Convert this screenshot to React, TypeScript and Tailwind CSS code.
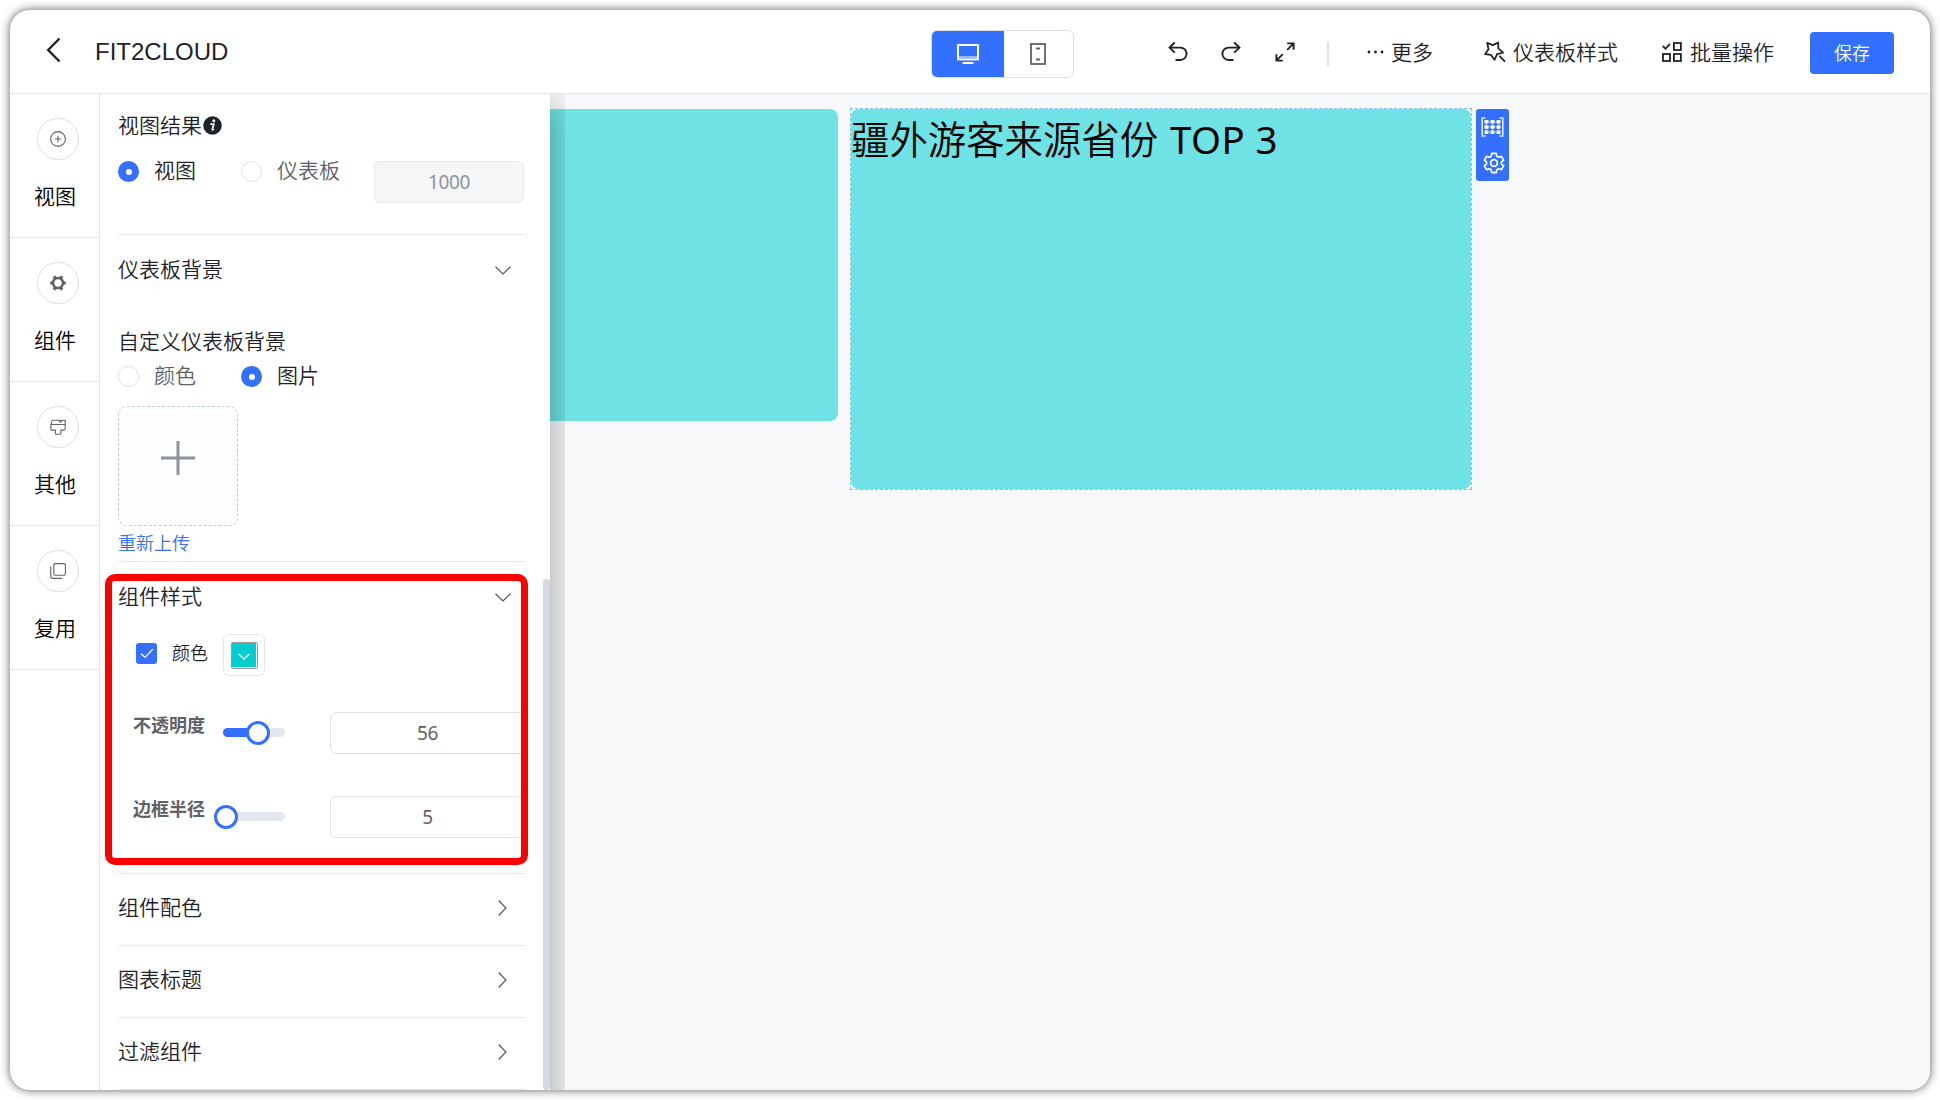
import React from "react";

type IconProps = { className?: string };

const ChevronDown = ({ className = "text-[#55585e]" }: IconProps) => (
  <svg width="16" height="9" viewBox="0 0 16 9" fill="none" stroke="currentColor" strokeWidth="1.2" className={className}>
    <path d="M0.5 0.7 8 7.9 15.5 0.7" />
  </svg>
);

const ChevronRight = () => (
  <svg width="9" height="16" viewBox="0 0 9 16" fill="none" stroke="#55585e" strokeWidth="1.2">
    <path d="M0.7 0.5 7.9 8 0.7 15.5" />
  </svg>
);

const CirclePlus = () => (
  <svg width="16" height="16" viewBox="0 0 16 16" fill="none" stroke="#606266" strokeWidth="1.1">
    <circle cx="8" cy="8" r="7.4" />
    <path d="M8 4.8v6.4M4.8 8h6.4" />
  </svg>
);

const SolidGear = () => (
  <svg width="16" height="16" viewBox="0 0 16 16" fill="none" stroke="#606266">
    <circle cx="8" cy="8" r="5" strokeWidth="2.6" />
    <path
      d="M.2 8h2.6M13.200 8h2.600M4.100 1.200l1.300 2.300M10.600 12.500l1.300 2.300M11.900 1.200l-1.300 2.300M5.400 12.500l-1.300 2.300"
      strokeWidth="3.2"
    />
  </svg>
);

const Brush = () => (
  <svg width="16" height="16" viewBox="0 0 16 16" fill="none" stroke="#606266" strokeWidth="1.1" strokeLinejoin="round">
    <path d="M1.300 5.500C1.300 3 1.600 1.200 3 1.200h7.600L9.600 3.200l3.200-2h2.400v4.300" />
    <path d="M.8 5.500h14.400v4.200q0 1.400-1.400 1.400h-2.900v3.300q0 .8-.8.800H6.200q-.8 0-.8-.8v-3.300H2.200q-1.400 0-1.400-1.400Z" />
  </svg>
);

const CopyDoc = () => (
  <svg width="16" height="16" viewBox="0 0 16 16" fill="none" stroke="#606266" strokeWidth="1.1">
    <rect x="3.800" y=".6" width="11.600" height="11.600" rx="1.400" />
    <path d="M.7 3.400V13q0 2.400 2 2.400h9.600" />
  </svg>
);

const InfoIcon = () => (
  <svg width="19" height="19" viewBox="0 0 19 19" className="ml-px">
    <circle cx="9.500" cy="9.500" r="9.300" fill="#1f2329" />
    <circle cx="10.800" cy="4.800" r="1.500" fill="#fff" />
    <path d="M7.400 8h3.400L9.300 13.400q-.2.9 1.600-.2M7.400 8.100h2" stroke="#fff" strokeWidth="1.700" fill="none" />
  </svg>
);

const Monitor = () => (
  <svg width="22" height="20" viewBox="0 0 22 20" fill="none" stroke="#fff">
    <rect x="1" y="1" width="20" height="14.400" strokeWidth="2" />
    <path d="M1 13h20" strokeWidth="1" />
    <path d="M5.500 19h11" strokeWidth="2" />
  </svg>
);

const Tablet = () => (
  <svg width="16" height="22" viewBox="0 0 16 22" fill="none" stroke="#606266">
    <rect x="1" y="1" width="14" height="20" strokeWidth="1.800" />
    <path d="M6 5.400h4M6 16.600h4" strokeWidth="2" />
  </svg>
);

const Undo = ({ className = "" }: IconProps) => (
  <svg width="20" height="20" viewBox="0 0 20 20" fill="none" stroke="#1f2329" strokeWidth="1.900" strokeLinecap="round" className={className}>
    <path d="M6.200 1 1.600 5.600l4.600 4.600" />
    <path d="M1.800 5.600h10.600a6.100 6.100 0 0 1 0 12.400H8.200" />
  </svg>
);

const Expand = () => (
  <svg width="20" height="20" viewBox="0 0 20 20" fill="none" stroke="#1f2329" strokeWidth="1.900">
    <path d="M12.200 1.400h6.400v6.400M18.400 1.600l-6.200 6.200M1.400 12.200v6.400h6.400M1.600 18.400l6.200-6.200" />
  </svg>
);

const MagicStar = () => (
  <svg width="22" height="22" viewBox="0 0 22 22" fill="none" stroke="#1f2329" strokeWidth="1.800" strokeLinejoin="round">
    <path d="m3.200 1.900 5.700 2.200 5.300-2.600.1 5.800 4.800 4.300-6 1.600-2.600 5.600-3.600-5-5.900-.6 3.500-5Z" />
    <path d="m15.400 14.800 5.600 5.800" />
  </svg>
);

const BatchIcon = () => (
  <svg width="20" height="20" viewBox="0 0 20 20" fill="none" stroke="#1f2329" strokeWidth="1.800">
    <path d="m.8 4 2.800 2.800L8 1.800" />
    <rect x="11.900" y="1" width="7" height="7" />
    <rect x="1" y="12" width="7" height="7" />
    <rect x="11.900" y="12" width="7" height="7" />
  </svg>
);

const MatrixIcon = () => (
  <svg width="23" height="20" viewBox="0 0 23 20" fill="none" stroke="#fff">
    <path d="M4.500 1H1.200v18h3.300M18.500 1h3.300v18h-3.300" strokeWidth="1.600" opacity=".85" />
    <path d="M5.500 3v14M11.500 3v14M17.500 3v14M3 5h17M3 10h17M3 15h17" strokeWidth="1" opacity=".55" />
    <path d="M5.500 3v14M11.500 3v14M17.500 3v14" strokeWidth="3.800" strokeDasharray="3.600 1.600" />
  </svg>
);

const OutlineGear = () => (
  <svg width="22" height="22" viewBox="0 0 24 24" fill="none" stroke="#fff" strokeWidth="1.900" strokeLinejoin="round">
    <path d="M9.600 1.500h4.800l.7 3.100 1.900 1.100 3.100-1 2.400 4.200-2.400 2.100v2l2.400 2.100-2.400 4.200-3.100-1-1.900 1.100-.7 3.100H9.600l-.7-3.100L7 18.300l-3.100 1-2.400-4.200L3.900 13v-2L1.500 8.900l2.400-4.200 3.100 1 1.900-1.100Z" />
    <circle cx="12" cy="12" r="3.700" />
  </svg>
);

function Radio({ on, label, className = "" }: { on?: boolean; label: string; className?: string }) {
  return (
    <div className={`flex h-[21px] items-center ${className}`}>
      {on ? (
        <span className="flex size-[21px] items-center justify-center rounded-full bg-[#3370ff]">
          <span className="size-[6px] rounded-full bg-white" />
        </span>
      ) : (
        <span className="size-[21px] rounded-full border border-[#dcdfe6] bg-white" />
      )}
      <span className={on ? "mb-[3px] ml-[15px] text-[#1f2329]" : "mb-[3px] ml-[15px] text-[#606266]"}>{label}</span>
    </div>
  );
}

function NavItem({ icon, label }: { icon: React.ReactNode; label: string }) {
  return (
    <div className="flex h-36 flex-col border-b border-[#e4e5e7] pt-6">
      <div className="ml-[27px] flex size-[42px] items-center justify-center rounded-full border border-[#dcdfe6]">{icon}</div>
      <div className="ml-6 mt-5 text-[21px] leading-[32px] text-black">{label}</div>
    </div>
  );
}

function SliderRow({ label, value, percent }: { label: string; value: string; percent: number }) {
  return (
    <div className="flex h-[42px]">
      <div className="w-[90px] shrink-0 pl-[15px] text-[18px] font-bold leading-[26px] text-[#606266]">{label}</div>
      <div className="ml-[15px] mt-4 h-[9px] w-[62px] shrink-0 rounded-full bg-[#e4e7ed]">
        <div className="relative h-full rounded-full bg-[#3370ff]" style={{ width: `${percent}%` }}>
          <span className="absolute -right-3 -top-[7px] size-6 rounded-full border-[3px] border-[#3370ff] bg-white" />
        </div>
      </div>
      <div className="ml-[45px] flex h-[42px] w-[195px] shrink-0 items-center justify-center rounded-md border border-[#dcdfe6] text-[19px] font-normal tracking-[-0.4px] text-[#606266]">
        {value}
      </div>
    </div>
  );
}

function CollapsedRow({ label }: { label: string }) {
  return (
    <div className="flex h-[72px] items-center justify-between border-b border-[#e6e8f0] pb-[3px] pr-[18px] text-[#1f2329]">
      <span className="mb-[2px]">{label}</span>
      <ChevronRight />
    </div>
  );
}

export default function App() {
  return (
    <div className="h-[1100px] w-[1940px] overflow-hidden bg-white p-[10px] font-['Noto_Sans','Noto_Sans_CJK_SC',sans-serif] text-[21px] font-[350] leading-[32px]">
      <div className="flex h-[1080px] w-[1920px] flex-col overflow-hidden rounded-[20px] bg-white shadow-[0_0_10px_rgba(0,0,0,0.65)]">
        <header className="flex h-[84px] shrink-0 items-center border-b border-[#e4e5e7] text-[#1f2329]">
          <svg width="15" height="26" viewBox="0 0 15 26" fill="none" stroke="#1f2329" strokeWidth="2.400" className="mb-1 ml-9">
            <path d="M13.500 1.500 2.200 13l11.300 11.500" />
          </svg>
          <div className="ml-[34px] w-[801px] font-['Liberation_Sans',sans-serif] text-[24px] font-normal">FIT2CLOUD</div>
          <div className="ml-[35px] mt-[5px] flex h-12 w-[143px] overflow-hidden rounded-md border border-[#dcdfe6]">
            <div className="-m-px flex w-[73px] items-center justify-center bg-[#3370ff]">
              <Monitor />
            </div>
            <div className="flex flex-1 items-center justify-center">
              <Tablet />
            </div>
          </div>
          <div className="ml-[93.500px] flex items-center">
            <Undo />
            <Undo className="ml-[33.500px] -scale-x-100" />
            <span className="ml-[34px]"><Expand /></span>
          </div>
          <span className="ml-8 mt-1 h-6 w-[2px] bg-[#dcdfe6]" />
          <svg width="17" height="4" viewBox="0 0 17 4" fill="#1f2329" className="ml-[38px]">
            <circle cx="2" cy="2" r="1.400" />
            <circle cx="8.500" cy="2" r="1.400" />
            <circle cx="15" cy="2" r="1.400" />
          </svg>
          <span className="ml-[7px]">更多</span>
          <span className="ml-[51px]"><MagicStar /></span>
          <span className="ml-[7px]">仪表板样式</span>
          <span className="ml-11"><BatchIcon /></span>
          <span className="ml-2">批量操作</span>
          <button className="ml-9 mt-[2px] h-[42px] w-[84px] rounded bg-[#3370ff] text-[18px] text-white">保存</button>
        </header>

        <div className="flex min-h-0 flex-1">
          <nav className="w-[90px] shrink-0 border-r border-[#e4e5e7]">
            <NavItem icon={<CirclePlus />} label="视图" />
            <NavItem icon={<SolidGear />} label="组件" />
            <NavItem icon={<Brush />} label="其他" />
            <NavItem icon={<CopyDoc />} label="复用" />
          </nav>

          <aside className="flex w-[450px] shrink-0 bg-white">
            <div className="ml-[18px] w-[407px] shrink-0">
              <section className="h-[141px] border-b border-[#e6e8f0] pt-[15px] text-[#1f2329]">
                <div className="flex items-center">
                  视图结果
                  <InfoIcon />
                </div>
                <div className="mt-5 flex">
                  <Radio on label="视图" className="w-[123px]" />
                  <Radio label="仪表板" className="w-[133px]" />
                  <div className="flex h-[42px] w-[150px] items-center justify-center rounded-md border border-[#e4e7ed] bg-[#f5f6f7] text-[19px] font-normal tracking-[-0.4px] text-[#8f959e]">
                    1000
                  </div>
                </div>
              </section>

              <section className="h-[327px] border-b border-[#e6e8f0] text-[#1f2329]">
                <div className="flex h-[70px] items-center justify-between pr-[14px]">
                  <span className="mb-[2px]">仪表板背景</span>
                  <ChevronDown />
                </div>
                <div className="mt-5">自定义仪表板背景</div>
                <div className="mt-[9px] flex">
                  <Radio label="颜色" className="w-[123px]" />
                  <Radio on label="图片" />
                </div>
                <div className="mt-[19px] flex size-[120px] items-center justify-center rounded-[9px] border border-dashed border-[#c0ccda] bg-[#fbfdff]">
                  <svg width="34" height="34" viewBox="0 0 34 34" stroke="#8c939d" strokeWidth="3" className="-mt-4">
                    <path d="M17 0v34M0 17h34" />
                  </svg>
                </div>
                <div className="mt-px text-[18px] text-[#3370ff]">重新上传</div>
              </section>

              <section className="-ml-[13px] mt-3 h-[291px] w-[423px] overflow-hidden rounded-[10px] border-[7px] border-[#ff0000] pl-[6px] text-[#1f2329]">
                <div className="flex h-8 items-center justify-between pr-[10px]">
                  <span className="mb-[3px]">组件样式</span>
                  <ChevronDown />
                </div>
                <div className="mt-[21px] flex h-[42px] items-center pl-[18px]">
                  <span className="mb-[3px] flex size-[21px] items-center justify-center rounded-[3px] bg-[#3370ff]">
                    <svg width="14" height="11" viewBox="0 0 14 11" fill="none" stroke="#fff" strokeWidth="1.200">
                      <path d="M1 5.500 5 9.500 13 1" />
                    </svg>
                  </span>
                  <span className="mb-[4px] ml-[15px] text-[18px]">颜色</span>
                  <span className="ml-[15px] flex size-[42px] items-center justify-center rounded-md border border-[#e6e6e6]">
                    <span className="flex size-[27px] rounded-[2px] border border-[#999999] pb-px pr-px">
                      <span className="flex flex-1 items-center justify-center bg-[#00ced1]">
                        <svg width="12" height="7" viewBox="0 0 12 7" fill="none" stroke="#fff" strokeWidth="1.300" className="mt-1">
                          <path d="M.6.7 6 6l5.400-5.300" />
                        </svg>
                      </span>
                    </span>
                  </span>
                </div>
                <div className="mt-9"><SliderRow label="不透明度" value="56" percent={56} /></div>
                <div className="mt-[42px]"><SliderRow label="边框半径" value="5" percent={5} /></div>
              </section>

              <div className="mt-2 border-t border-[#e6e8f0]">
                <CollapsedRow label="组件配色" />
                <CollapsedRow label="图表标题" />
                <CollapsedRow label="过滤组件" />
              </div>
            </div>
            <div className="ml-[18px] mt-[485px] h-[511px] w-[7px] shrink-0 rounded-full bg-[#d6dae3]" />
          </aside>

          <main className="relative flex min-w-0 flex-1 items-start bg-[#f7f8fa] pt-[14px]">
            <div className="absolute inset-y-0 left-0 z-10 w-[15px] bg-linear-to-r from-black/18 to-black/8 mask-[linear-gradient(to_bottom,rgba(0,0,0,0.35),black_40px)]" />
            <div className="mt-px h-[312px] w-[287.600px] rounded-r-lg bg-[#6ee2e4]" />
            <div className="ml-[12.400px] h-[382px] w-[622.500px] border border-dashed border-[#7cc0f8]">
              <div className="h-full rounded-lg bg-[#6ee2e4] pt-[2px] text-[38.400px] leading-[56px] text-black">
                疆外游客来源省份 <span className="ml-[2px] font-normal tracking-[0.4px]">TOP 3</span>
              </div>
            </div>
            <div className="ml-[4px] mt-px flex h-[72px] w-[33px] flex-col items-center rounded-[3px] bg-[#3370ff] pt-2">
              <MatrixIcon />
              <span className="ml-[3px] mt-[15px] leading-none"><OutlineGear /></span>
            </div>
          </main>
        </div>
      </div>
    </div>
  );
}
